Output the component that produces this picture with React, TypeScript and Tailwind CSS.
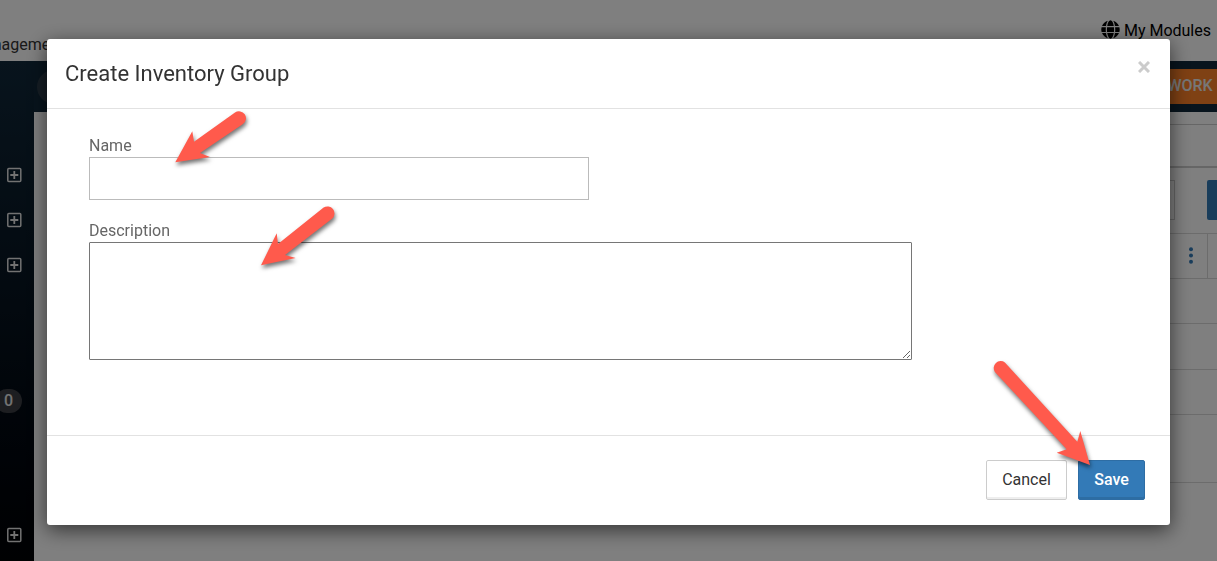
import React from "react";
import { FaGlobe } from "react-icons/fa";

const SIDE_ROWS = ["plus", "plus", "plus", "", "", "badge", "", "", "plus"];

function PlusBox() {
  return (
    <svg className="size-4" viewBox="0 0 16 16" fill="none" stroke="currentColor" aria-hidden="true">
      <rect x="1.8" y="1.5" width="13" height="13" rx="1" strokeWidth="1.5" />
      <path d="M8.3 4v8M4.3 8h8" strokeWidth="1.8" />
    </svg>
  );
}

function Sidebar() {
  return (
    <nav
      aria-label="Sections"
      className="w-[34px] shrink-0 bg-linear-to-b from-[#10283a] via-[#06121e] to-[#000205] pt-[91px] text-[#e4e4e4]"
    >
      {SIDE_ROWS.map((kind, i) => (
        <div key={i} className="flex h-[45px] items-center">
          {kind === "plus" && (
            <button type="button" aria-label="Expand section" className="ml-1.5">
              <PlusBox />
            </button>
          )}
          {kind === "badge" && (
            <span className="mt-0.5 -ml-[5px] flex h-6 w-[27px] items-center justify-center rounded-full bg-[#3a3d42] text-base font-medium">
              0
            </span>
          )}
        </div>
      ))}
    </nav>
  );
}

function Workspace() {
  return (
    <main className="flex min-w-0 grow flex-col">
      <div className="flex h-[51px] shrink-0 items-center justify-between bg-[#10283a]">
        <span className="ml-[3px] size-[34px] rounded-full bg-[#2c3c4a]" />
        <button
          type="button"
          className="-mr-20 flex h-[35px] items-center bg-[#ff8228] px-5 pb-0.5 text-base font-medium text-[#eeeeee]"
        >
          WORK ORDERS
        </button>
      </div>
      <div className="flex flex-col pl-5">
        <div className="mt-3 h-11 shrink-0 border-t border-b-2 border-[#cccccc]" />
        <div className="flex h-[65px] shrink-0 items-center justify-end gap-8 pb-px">
          <div className="h-10 w-60 border border-[#cccccc]" />
          <button type="button" aria-label="Search" className="-mr-8 h-10 w-[42px] rounded-[2px] bg-[#337ab7]" />
        </div>
        <div className="flex h-[46px] shrink-0 justify-end border-y border-[#d8d8d8]">
          <button type="button" aria-label="Column options" className="flex w-8 items-center justify-center text-[#337ab7]">
            <svg className="h-5 w-1" viewBox="0 0 4 20" fill="currentColor" aria-hidden="true">
              <circle cx="2" cy="3.2" r="2" />
              <circle cx="2" cy="9.5" r="2" />
              <circle cx="2" cy="15.8" r="2" />
            </svg>
          </button>
          <div className="w-2.5 border-l border-[#d8d8d8]" />
        </div>
        <div className="h-[45px] shrink-0 border-b border-[#d8d8d8]" />
        <div className="h-[46px] shrink-0 border-b border-[#d8d8d8]" />
        <div className="h-[45px] shrink-0 border-b border-[#d8d8d8]" />
        <div className="h-[68px] shrink-0 border-b border-[#d8d8d8]" />
      </div>
    </main>
  );
}

function Arrow({ className, viewBox, d }: { className: string; viewBox: string; d: string }) {
  return (
    <svg
      className={`pointer-events-none absolute overflow-visible drop-shadow-[1px_3px_2px_rgba(0,0,0,0.55)] ${className}`}
      viewBox={viewBox}
      fill="#ff5a4c"
      aria-hidden="true"
    >
      <path d={d} />
    </svg>
  );
}

function CreateDialog() {
  return (
    <section
      role="dialog"
      aria-modal="true"
      aria-labelledby="dialog-title"
      className="w-full rounded-[3px] bg-white shadow-[0_5px_20px_rgba(0,0,0,0.6)]"
    >
      <header className="flex h-[70px] items-start justify-between border-b border-[#e2e2e2] pt-[18px] pr-5 pl-[18px]">
        <h1 id="dialog-title" className="text-[22px] leading-[34px] text-[#333333]">
          Create Inventory Group
        </h1>
        <button type="button" aria-label="Close" className="flex h-5 w-3 items-center justify-center text-[#cccccc]">
          <svg className="size-3" viewBox="0 0 12 12" stroke="currentColor" strokeWidth="3" aria-hidden="true">
            <path d="M1 1l10 10M11 1L1 11" />
          </svg>
        </button>
      </header>
      <form onSubmit={(e) => e.preventDefault()}>
        <div className="px-[42px] pt-[26px] pb-[75px] text-base text-[#666666]">
          <div className="relative">
            <label htmlFor="group-name" className="block h-[22px] leading-[22px]">
              Name
            </label>
            <input
              id="group-name"
              type="text"
              className="block h-[43px] w-[500px] border border-[#bbbbbb] bg-white px-3 outline-none"
            />
            <Arrow
              className="top-[-25px] left-[86px] h-[54px] w-[72px]"
              viewBox="175 110 72 54"
              d="M175.3 162.3 192.3 131.3 194 141.7 235 112.6A7 7 0 0 1 243 124.1L200 153 210 157Z"
            />
          </div>
          <div className="relative mt-5">
            <label htmlFor="group-description" className="block h-[22px] leading-[22px]">
              Description
            </label>
            <textarea
              id="group-description"
              className="block h-[118px] w-[823px] resize rounded-[1px] border border-[#767676] bg-white p-2 outline-none"
            />
            <Arrow
              className="top-[-15px] left-[171px] h-[62px] w-[75px]"
              viewBox="260 205 75 62"
              d="M261 265.3 276.7 233.3 278 244 323.6 207.6A7 7 0 0 1 332.3 218.5L285 255 295.7 258Z"
            />
          </div>
        </div>
        <footer className="flex justify-end gap-[11px] border-t border-[#e2e2e2] px-[25px] pt-6 pb-[25px]">
          <button
            type="button"
            className="h-10 w-[81px] rounded-[2px] border border-[#cccccc] bg-white text-base text-[#333333] shadow-[inset_0_-2px_0_#eeeeee]"
          >
            Cancel
          </button>
          <div className="relative">
            <button
              type="submit"
              className="h-10 w-[67px] rounded-[2px] border border-[#2e6da4] bg-[#337ab7] text-base font-medium text-white shadow-[inset_0_-2px_0_#2d6da3]"
            >
              Save
            </button>
            <Arrow
              className="top-[-100px] left-[-86px] h-[106px] w-[100px]"
              viewBox="992 360 100 106"
              d="M1090 465 1080.3 431 1077.3 441.7 1004.9 362.4A7 7 0 0 0 994.9 371.9L1066.7 449.3 1056.7 452.7Z"
            />
          </div>
        </footer>
      </form>
    </section>
  );
}

export default function App() {
  return (
    <div className="flex h-screen flex-col overflow-hidden bg-white font-['Roboto',sans-serif]">
      <header className="flex h-[61px] shrink-0 justify-between">
        <span className="-ml-[30px] pt-[33px] text-base leading-6 text-[#333333]">Management</span>
        <a href="#modules" className="mr-1.5 flex items-start gap-1 pt-[19px] text-base leading-6 text-black">
          <FaGlobe className="mt-px size-[19px]" aria-hidden="true" />
          My Modules
        </a>
      </header>
      <div className="flex min-h-0 grow">
        <Sidebar />
        <Workspace />
      </div>
      <div className="fixed inset-0 overflow-auto bg-black/50 px-[47px] pt-[39px] pb-9">
        <CreateDialog />
      </div>
    </div>
  );
}
